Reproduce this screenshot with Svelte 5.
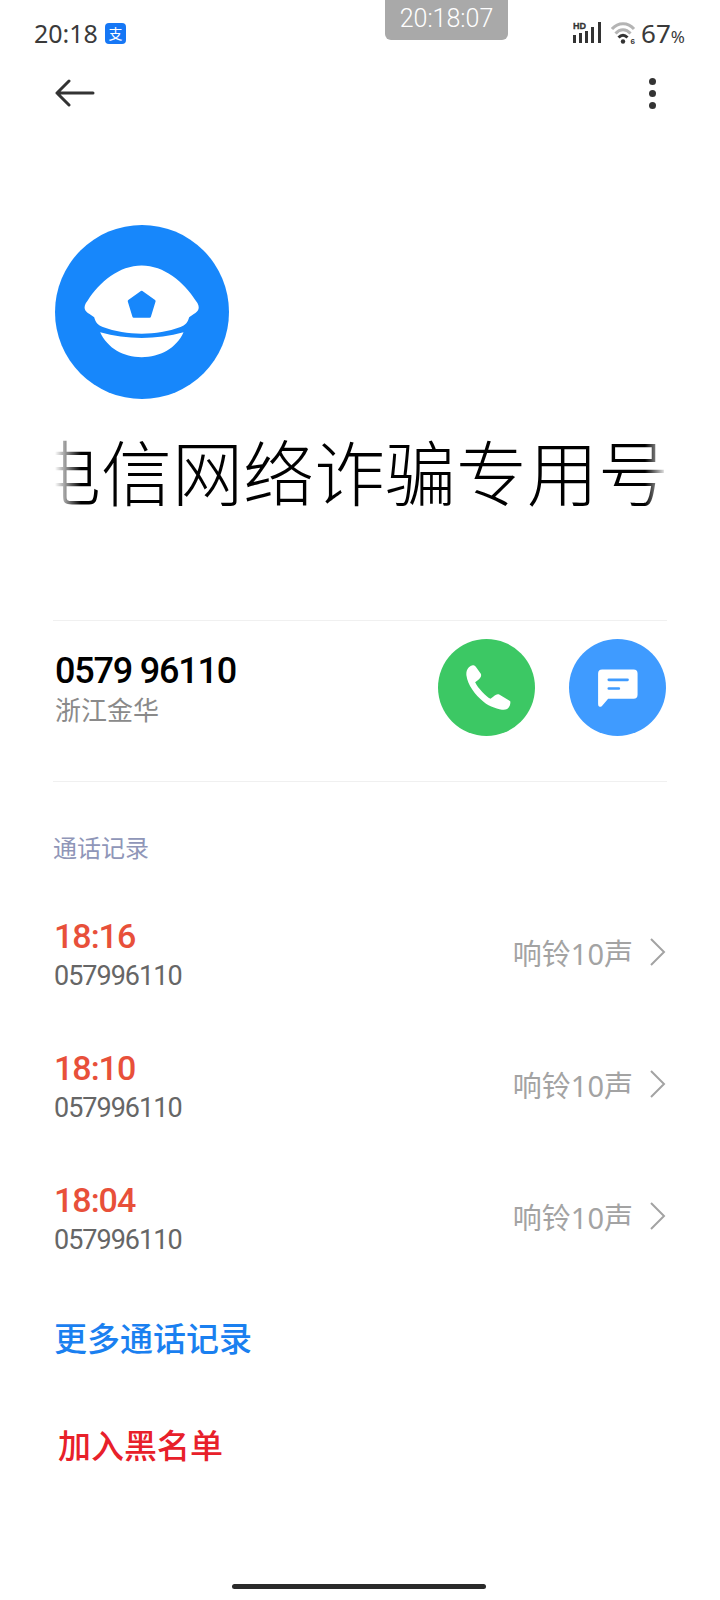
<script lang="ts">
    const calls = [
        { time: "18:16", number: "057996110", ring: "响铃10声" },
        { time: "18:10", number: "057996110", ring: "响铃10声" },
        { time: "18:04", number: "057996110", ring: "响铃10声" },
    ];
</script>

<div class="page" lang="zh-CN">
    <div class="toast">20:18:07</div>

    <header class="status">
        <div class="status-left">
            <span class="clock">20:18</span>
            <span class="alipay">支</span>
        </div>
        <div class="status-right">
            <svg class="signal" viewBox="0 0 29 22" width="29" height="22">
                <text x="0" y="7" class="hd">HD</text>
                <rect x="0" y="13" width="3" height="8" fill="#333" />
                <rect x="6" y="11" width="3" height="10" fill="#333" />
                <rect x="12" y="9" width="3" height="12" fill="#333" />
                <rect x="18" y="5" width="3" height="16" fill="#333" />
                <rect x="25" y="0" width="3" height="21" fill="#333" />
            </svg>
            <svg class="wifi" viewBox="0 0 26 22" width="26" height="22" fill="none">
                <path d="M1 7 C7 0 17 0 23 7" stroke="#b4b4b4" stroke-width="3" />
                <path d="M4.5 11.5 C9 6.5 15 6.5 19.5 11.5" stroke="#b4b4b4" stroke-width="3" />
                <path d="M7.5 15.5 C10.5 12.5 13.5 12.5 16.5 15.5" stroke="#333" stroke-width="3" />
                <circle cx="12" cy="19.5" r="2.2" fill="#333" />
                <text x="19.5" y="21.5" class="wifi-six">6</text>
            </svg>
            <span class="battery">67<small>%</small></span>
        </div>
    </header>

    <nav class="appbar">
        <svg viewBox="0 0 40 28" width="40" height="28" fill="none" stroke="#333" stroke-width="3" stroke-linecap="round" stroke-linejoin="round">
            <path d="M2 14 H38 M14 2 L2 14 L14 26" />
        </svg>
        <div class="dots"><i></i><i></i><i></i></div>
    </nav>

    <div class="avatar">
        <svg viewBox="44 44 524 524" width="174" height="174">
            <circle cx="306" cy="306" r="262" fill="#1787fb" />
            <path d="M142 272 C178 215 238 166 305 166 C372 166 432 215 468 272 C484 292 476 304 462 312 L448 322 C444 338 436 346 422 351 C350 378 260 378 188 351 C174 346 166 338 162 322 L148 312 C134 304 126 292 142 272 Z" fill="#fff" />
            <path d="M180 367 C260 390 350 390 431 367 C410 415 360 442 305 442 C250 442 202 415 180 367 Z" fill="#fff" />
            <path d="M305 246 L343 273 L329 319 L281 319 L267 273 Z" fill="#1787fb" stroke="#1787fb" stroke-width="8" stroke-linejoin="round" />
        </svg>
    </div>

    <div class="title-wrap">
        <h1>电信网络诈骗专用号</h1>
    </div>

    <section class="contact">
        <div class="contact-text">
            <div class="phone">0579 96110</div>
            <div class="region">浙江金华</div>
        </div>
        <div class="actions">
            <div class="round green">
                <svg viewBox="113 89 290 290" width="97" height="97">
                    <path d="M215 168 C205 170 196 182 198 198 C202 225 222 255 250 277 C268 292 300 302 315 300 C325 298 331 285 329 275 L296 255 C290 253 284 256 278 262 L270 268 C256 260 232 235 224 218 L232 212 C240 206 244 200 241 193 L226 172 C222 168 218 167 215 168 Z" fill="#fff" />
                </svg>
            </div>
            <div class="round blue">
                <svg viewBox="505 89 290 290" width="97" height="97">
                    <path d="M604 180 H698 Q710 180 710 192 V256 Q710 268 698 268 H622 L603 290 Q592 296 592 282 V192 Q592 180 604 180 Z" fill="#fff" />
                    <path d="M624 211 H680 M624 237 H654" stroke="#3f9bff" stroke-width="8" stroke-linecap="round" />
                </svg>
            </div>
        </div>
    </section>

    <section class="history">
        <h2>通话记录</h2>
        {#each calls as call}
            <div class="call">
                <div>
                    <div class="time">{call.time}</div>
                    <div class="number">{call.number}</div>
                </div>
                <div class="ring">
                    <span>{call.ring}</span>
                    <svg viewBox="0 0 16 28" width="16" height="28" fill="none" stroke="#a3a3a3" stroke-width="2">
                        <path d="M1 1 L14 14 L1 27" />
                    </svg>
                </div>
            </div>
        {/each}
    </section>

    <div class="more">更多通话记录</div>
    <div class="block">加入黑名单</div>

    <div class="home-bar"></div>
</div>

<style>
    :global(body) {
        margin: 0;
        background: #fff;
    }

    .page {
        position: relative;
        width: 720px;
        height: 1600px;
        overflow: hidden;
        background: #fff;
        font-family: "Noto Sans", "Noto Sans CJK SC", sans-serif;
        display: flex;
        flex-direction: column;
    }

    .toast {
        position: absolute;
        left: 385px;
        top: 0;
        width: 123px;
        height: 40px;
        border-radius: 0 0 6px 6px;
        background: #a9a9a9;
        color: #fff;
        font-family: Roboto, sans-serif;
        font-size: 25px;
        font-weight: 300;
        line-height: 38px;
        text-align: center;
    }

    .status {
        height: 66px;
        padding: 0 35px 0 34px;
        display: flex;
        justify-content: space-between;
        align-items: center;
        box-sizing: border-box;
        color: #3a3a3a;
    }

    .status-left,
    .status-right {
        display: flex;
        align-items: center;
    }

    .clock {
        font-size: 25px;
    }

    .alipay {
        width: 21px;
        height: 21px;
        margin-left: 7px;
        border-radius: 4px;
        background: #1677f5;
        color: #fff;
        font-size: 14px;
        line-height: 21px;
        text-align: center;
    }

    .hd {
        font-family: "Liberation Sans", sans-serif;
        font-size: 9px;
        font-weight: 700;
        fill: #333;
        stroke: #333;
        stroke-width: 0.3px;
    }

    .wifi {
        margin-left: 9px;
    }

    .wifi-six {
        font-family: "Liberation Sans", sans-serif;
        font-size: 8px;
        font-weight: 700;
        fill: #333;
    }

    .battery {
        margin-left: 4px;
        font-size: 26px;
    }

    .battery small {
        margin-left: 0;
        font-size: 17px;
    }

    .appbar {
        height: 54px;
        padding: 0 64px 0 55px;
        display: flex;
        justify-content: space-between;
        align-items: center;
    }

    .dots {
        display: flex;
        flex-direction: column;
        gap: 5px;
    }

    .dots i {
        width: 7px;
        height: 7px;
        border-radius: 50%;
        background: #333;
    }

    .avatar {
        margin: 105px 0 0 55px;
        height: 174px;
    }

    .avatar svg {
        display: block;
    }

    .title-wrap {
        margin: 34px 0 0 55px;
        width: 612px;
        height: 80px;
        overflow: hidden;
        -webkit-mask-image: linear-gradient(90deg, transparent 0, #000 26px, #000 590px, transparent 612px);
        mask-image: linear-gradient(90deg, transparent 0, #000 26px, #000 590px, transparent 612px);
    }

    h1 {
        margin: 0 0 0 -25px;
        width: 640px;
        font-size: 71px;
        font-weight: 300;
        line-height: 80px;
        white-space: nowrap;
        color: #000;
    }

    .contact {
        margin: 107px 53px 0 53px;
        height: 162px;
        box-sizing: border-box;
        border-top: 1px solid #f0f0f0;
        border-bottom: 1px solid #f0f0f0;
        display: flex;
        justify-content: space-between;
        padding: 18px 1px 0 2px;
    }

    .phone {
        margin-top: 10px;
        font-family: Roboto, sans-serif;
        font-size: 36px;
        font-weight: 500;
        letter-spacing: -1.2px;
        line-height: 44px;
        color: #000;
    }

    .region {
        font-size: 26px;
        line-height: 34px;
        color: #8a8a8a;
    }

    .actions {
        display: flex;
        gap: 34px;
    }

    .round {
        width: 97px;
        height: 97px;
        border-radius: 50%;
    }

    .round svg {
        display: block;
    }

    .green {
        background: #3cc864;
    }

    .blue {
        background: #3f9bff;
    }

    .history {
        padding: 0 54px 0 54px;
    }

    h2 {
        margin: 49px 0 23px -1px;
        font-size: 24px;
        font-weight: 400;
        line-height: 34px;
        color: #8f96b8;
    }

    .call {
        height: 132px;
        display: flex;
        justify-content: space-between;
        align-items: center;
    }

    .time {
        font-family: Roboto, sans-serif;
        font-size: 34px;
        font-weight: 500;
        letter-spacing: -1px;
        line-height: 44px;
        color: #e8503a;
    }

    .number {
        font-family: Roboto, sans-serif;
        font-size: 27px;
        letter-spacing: -1px;
        line-height: 36px;
        color: #666;
    }

    .ring {
        display: flex;
        align-items: center;
        gap: 17px;
        padding-bottom: 4px;
        font-size: 29px;
        color: #a3a3a3;
    }

    .ring svg {
        display: block;
    }

    .more {
        margin: 33px 0 0 54px;
        font-size: 33px;
        font-weight: 500;
        line-height: 44px;
        color: #1a80f0;
    }

    .block {
        margin: 63px 0 0 58px;
        font-size: 33px;
        font-weight: 500;
        line-height: 44px;
        color: #e8202a;
    }

    .home-bar {
        position: absolute;
        left: 232px;
        bottom: 11px;
        width: 254px;
        height: 5px;
        border-radius: 3px;
        background: #2a2a2a;
    }
</style>
